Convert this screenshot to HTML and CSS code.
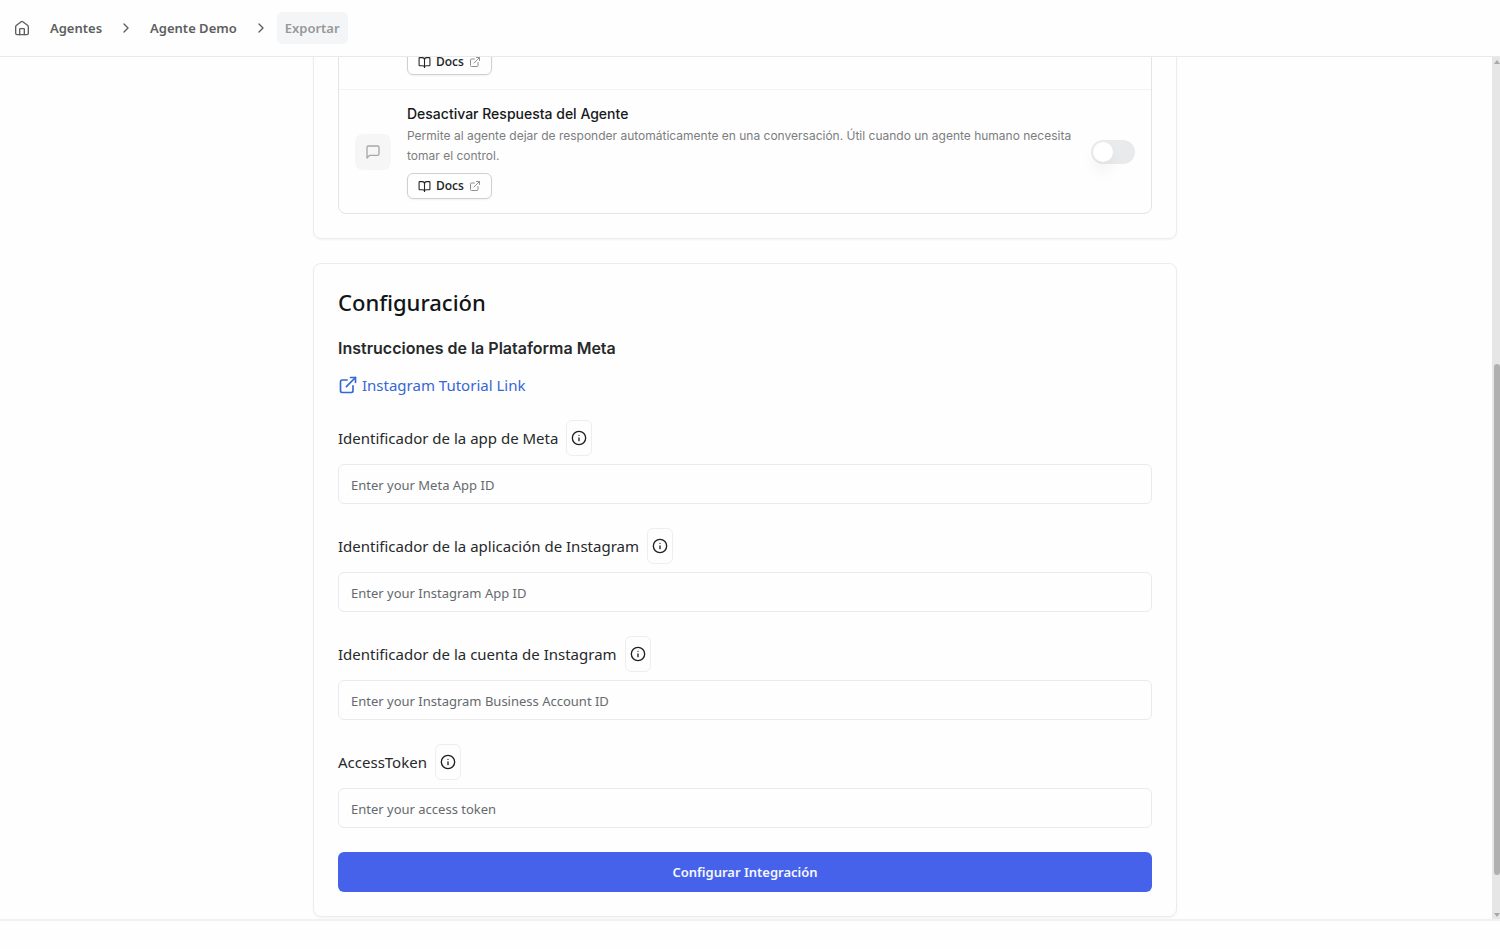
FILE: index.html
```html
<!DOCTYPE html>
<html lang="es">
<head>
	<meta charset="utf-8" />
	<title>Exportar - Agente Demo</title>
	<meta name="viewport" content="width=device-width,initial-scale=1.0" />
	<link rel="stylesheet" href="styles.css">
</head>
<body>
	<!-- shared icons -->
	<svg class="sprite" aria-hidden="true">
		<symbol id="i-home" viewBox="0 0 24 24">
			<path d="M2.500 10a2 2 0 0 1 .8-1.600l7.500-5.900a2 2 0 0 1 2.400 0l7.500 5.900a2 2 0 0 1 .8 1.600V20a2 2 0 0 1-2 2h-15a2 2 0 0 1-2-2z" />
			<path d="M8.500 22v-8a1 1 0 0 1 1-1h5a1 1 0 0 1 1 1v8" />
		</symbol>
		<symbol id="i-chevron" viewBox="0 0 24 24">
			<path d="M9 18l6-6-6-6" />
		</symbol>
		<symbol id="i-book" viewBox="0 0 24 24">
			<path d="M12 7v14" />
			<path d="M3 18a1 1 0 0 1-1-1V4a1 1 0 0 1 1-1h5a4 4 0 0 1 4 4 4 4 0 0 1 4-4h5a1 1 0 0 1 1 1v13a1 1 0 0 1-1 1h-6a3 3 0 0 0-3 3 3 3 0 0 0-3-3z" />
		</symbol>
		<symbol id="i-external" viewBox="0 0 24 24">
			<path d="M15 3h6v6" />
			<path d="M10 14L21 3" />
			<path d="M18 13v6a2 2 0 0 1-2 2H5a2 2 0 0 1-2-2V8a2 2 0 0 1 2-2h6" />
		</symbol>
		<symbol id="i-message" viewBox="0 0 24 24">
			<path d="M21 15a2 2 0 0 1-2 2H7l-4 4V5a2 2 0 0 1 2-2h14a2 2 0 0 1 2 2z" />
		</symbol>
		<symbol id="i-info" viewBox="0 0 24 24">
			<circle cx="12" cy="12" r="10" />
			<path d="M12 16v-4" />
			<path d="M12 8h.01" />
		</symbol>
	</svg>

	<header class="topbar">
		<nav class="crumbs" aria-label="Breadcrumb">
			<a class="crumb home" href="#" aria-label="Inicio"><svg class="icon"><use href="#i-home" /></svg></a>
			<a class="crumb" href="#">Agentes</a>
			<svg class="icon sep"><use href="#i-chevron" /></svg>
			<a class="crumb" href="#">Agente Demo</a>
			<svg class="icon sep"><use href="#i-chevron" /></svg>
			<span class="crumb current">Exportar</span>
		</nav>
	</header>

	<div class="scroller">
		<main class="content">
			<section class="card">
				<div class="tools">
					<div class="tool previous">
						<a class="docs" href="#"><svg class="icon book"><use href="#i-book" /></svg>Docs<svg class="icon ext"><use href="#i-external" /></svg></a>
					</div>
					<div class="tool">
						<div class="tool-icon"><svg class="icon"><use href="#i-message" /></svg></div>
						<div class="tool-text">
							<label class="tool-name" for="disable">Desactivar Respuesta del Agente</label>
							<p class="tool-desc">Permite al agente dejar de responder automáticamente en una conversación. Útil cuando un agente humano necesita tomar el control.</p>
							<a class="docs" href="#"><svg class="icon book"><use href="#i-book" /></svg>Docs<svg class="icon ext"><use href="#i-external" /></svg></a>
						</div>
						<input type="checkbox" class="switch" id="disable" role="switch" />
					</div>
				</div>
			</section>

			<section class="card">
				<h2 class="title">Configuración</h2>
				<h3 class="subtitle">Instrucciones de la Plataforma Meta</h3>
				<a class="tutorial" href="#"><svg class="icon"><use href="#i-external" /></svg>Instagram Tutorial Link</a>
				<form class="config">
					<div class="field">
						<div class="field-head">
							<label for="app">Identificador de la app de Meta</label>
							<button type="button" class="info" aria-label="Info"><svg class="icon"><use href="#i-info" /></svg></button>
						</div>
						<input type="text" class="text" id="app" placeholder="Enter your Meta App ID" />
					</div>
					<div class="field">
						<div class="field-head">
							<label for="igapp">Identificador de la aplicación de Instagram</label>
							<button type="button" class="info" aria-label="Info"><svg class="icon"><use href="#i-info" /></svg></button>
						</div>
						<input type="text" class="text" id="igapp" placeholder="Enter your Instagram App ID" />
					</div>
					<div class="field">
						<div class="field-head">
							<label for="account">Identificador de la cuenta de Instagram</label>
							<button type="button" class="info" aria-label="Info"><svg class="icon"><use href="#i-info" /></svg></button>
						</div>
						<input type="text" class="text" id="account" placeholder="Enter your Instagram Business Account ID" />
					</div>
					<div class="field">
						<div class="field-head">
							<label for="token">AccessToken</label>
							<button type="button" class="info" aria-label="Info"><svg class="icon"><use href="#i-info" /></svg></button>
						</div>
						<input type="text" class="text" id="token" placeholder="Enter your access token" />
					</div>
					<button type="submit" class="submit">Configurar Integración</button>
				</form>
			</section>
		</main>
		<div class="scrollbar" aria-hidden="true">
			<svg class="arrow" viewBox="0 0 6 4"><path d="M0 4l3-4 3 4z" /></svg>
			<div class="track"><div class="thumb"></div></div>
			<svg class="arrow" viewBox="0 0 6 4"><path d="M0 0l3 4 3-4z" /></svg>
		</div>
	</div>
	<footer class="bottombar"></footer>
</body>
</html>
```
FILE: styles.css
```css
* {
	box-sizing: border-box;
}
body {
	margin: 0;
	height: 100vh;
	display: flex;
	flex-direction: column;
	background-color: #fefefe;
	color: #27292b;
	font-family: "Noto Sans", "Open Sans", sans-serif;
	font-size: 15px;
	line-height: 24px;
}
h2, h3, p {
	margin: 0;
}
a {
	color: inherit;
	text-decoration: none;
}
.sprite {
	display: none;
}
.icon {
	width: 16px;
	height: 16px;
	flex: none;
	fill: none;
	stroke: currentColor;
	stroke-width: 2;
	stroke-linecap: round;
	stroke-linejoin: round;
}

/* breadcrumb bar */
.topbar {
	flex: none;
	height: 57px;
	padding: 0 6px;
	display: flex;
	align-items: center;
	border-bottom: 1px solid #e8e9ea;
}
.crumbs {
	display: flex;
	align-items: center;
	gap: 8px;
	color: #5c5e60;
	font-size: 13px;
	font-weight: 600;
}
.crumb {
	display: flex;
	align-items: center;
	height: 32px;
	padding: 0 8px;
	border-radius: 6px;
}
.home {
	margin-right: -4px;
}
.current {
	background-color: #f4f5f6;
	color: #96989a;
}

/* scrolled area */
.scroller {
	flex: 1;
	min-height: 0;
	display: flex;
	gap: 2px;
}
.content {
	flex: 1;
	min-width: 0;
	display: flex;
	flex-direction: column;
	justify-content: flex-end;
	align-items: center;
	gap: 24px;
	padding-bottom: 2px;
	overflow: hidden;
}
.card {
	flex: none;
	width: 100%;
	max-width: 864px;
	padding: 24px;
	border: 1px solid #eaeced;
	border-radius: 8px;
	box-shadow: 0 1px 2px rgba(0, 0, 0, .05);
}
.tools {
	border: 1px solid #e2e4e6;
	border-radius: 8px;
}
.tool {
	display: flex;
	align-items: center;
	gap: 16px;
	padding: 14px 16px;
}
.previous {
	padding-left: 68px;
	border-bottom: 1px solid #f2f3f4;
}
.tool-icon {
	width: 36px;
	height: 36px;
	flex: none;
	display: flex;
	align-items: center;
	justify-content: center;
	border-radius: 8px;
	background-color: #f6f6f6;
	color: #a8a8a8;
}
.tool-text {
	flex: 1;
	font-family: Inter, sans-serif;
	line-height: 20px;
}
.tool-name {
	display: block;
	color: #17191b;
	font-size: 14px;
	font-weight: 500;
}
.tool-desc {
	margin: 2px 0 7px;
	color: #7c7d7f;
	font-size: 12px;
}
.docs {
	display: flex;
	align-items: center;
	gap: 5px;
	width: fit-content;
	height: 26px;
	padding: 0 10px;
	border: 1px solid #cfd0d2;
	border-radius: 6px;
	box-shadow: 0 1px 2px rgba(0, 0, 0, .06);
	color: #232527;
	font-family: "Open Sans", "Noto Sans", sans-serif;
	font-size: 12px;
	font-weight: 600;
}
.book {
	width: 13px;
	height: 13px;
}
.ext {
	width: 12px;
	height: 12px;
	color: #8f9193;
}
.switch {
	appearance: none;
	flex: none;
	width: 44px;
	height: 24px;
	margin: 0;
	padding: 2px;
	border-radius: 12px;
	background-color: #e8eaeb;
	cursor: pointer;
}
.switch::before {
	content: "";
	display: block;
	width: 20px;
	height: 20px;
	border-radius: 50%;
	background-color: #ffffff;
	box-shadow: 0 10px 15px rgba(0, 0, 0, .05);
}
.switch:checked::before {
	margin-left: 20px;
}

/* settings */
.title {
	margin-bottom: 20px;
	color: #111517;
	font-size: 22px;
	font-weight: 500;
	line-height: 28px;
}
.subtitle {
	margin-bottom: 13px;
	font-family: Inter, sans-serif;
	font-size: 16px;
	font-weight: 600;
}
.tutorial {
	display: flex;
	align-items: center;
	gap: 4px;
	width: fit-content;
	margin-bottom: 23px;
	color: #3567d6;
}
.tutorial .icon {
	width: 20px;
	height: 20px;
}
.config {
	display: flex;
	flex-direction: column;
	gap: 24px;
}
.field {
	display: flex;
	flex-direction: column;
	gap: 8px;
}
.field-head {
	display: flex;
	align-items: center;
	gap: 8px;
}
.info {
	display: flex;
	align-items: center;
	height: 36px;
	padding: 0 4px;
	border: 1px solid #eceeef;
	border-radius: 6px;
	background-color: transparent;
	color: #1c1e20;
	cursor: pointer;
}
.text {
	width: 100%;
	height: 40px;
	padding: 2px 12px 0;
	border: 1px solid #e8eaec;
	border-radius: 6px;
	background-color: transparent;
	font: inherit;
	font-size: 13px;
}
.text::placeholder {
	color: #666a6d;
}
.submit {
	height: 40px;
	border: 0;
	border-radius: 6px;
	background-color: #4762ea;
	color: #f5f7ff;
	font: inherit;
	font-size: 13px;
	font-weight: 600;
	cursor: pointer;
}

/* scrollbar */
.scrollbar {
	flex: none;
	width: 8px;
	padding: 3px 0 2px 2px;
	display: flex;
	flex-direction: column;
	background-color: #e6e6e6;
}
.arrow {
	width: 6px;
	height: 4px;
	fill: #a8a8a8;
}
.track {
	flex: 1;
	display: flex;
	flex-direction: column;
	justify-content: flex-end;
	padding-bottom: 38px;
}
.thumb {
	height: 63%;
	border-radius: 3px;
	background-color: #b0b0b0;
}
.bottombar {
	flex: none;
	height: 30px;
	border-top: 2px solid #f0f1f1;
}
```
